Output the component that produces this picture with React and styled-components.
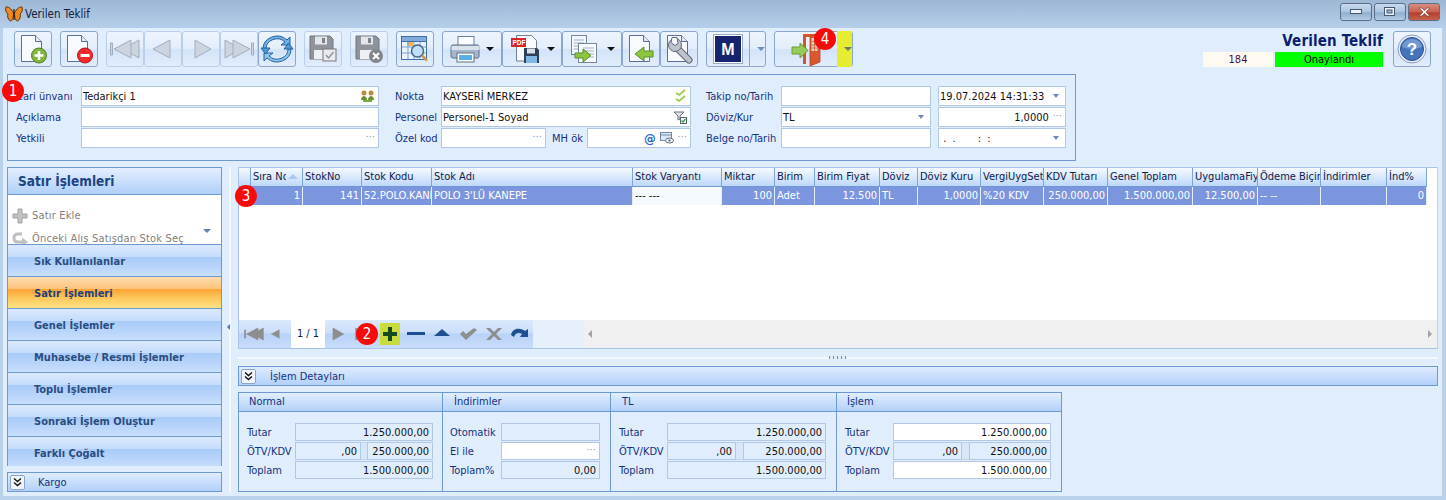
import React from "react";
import styled, { createGlobalStyle } from "styled-components";

const GlobalStyle = createGlobalStyle`
  html, body { margin: 0; padding: 0; background: #bad1ea; }
  body { font-family: "DejaVu Sans Condensed", "DejaVu Sans", "Liberation Sans", sans-serif; font-size: 11px; color: #000; }
  * { box-sizing: border-box; }
`;

const Page = styled.div`
  width: 1446px;
  height: 500px;
  overflow: hidden;
  position: relative;
  background: #bad1ea;
  display: flex;
  flex-direction: column;
`;

const TitleBar = styled.div`
  height: 28px;
  flex: none;
  display: flex;
  align-items: center;
  padding: 0 6px 0 5px;
  background: linear-gradient(#9db7d5, #b5cee9);
  font-size: 11.5px;
  color: #10203c;
`;
const TitleText = styled.span`
  margin-left: 2px;
  flex: 1;
`;
const WinButton = styled.div`
  width: 32px;
  height: 18px;
  margin-left: 2px;
  margin-top: -4px;
  border: 1px solid #5d6f88;
  border-radius: 3px;
  background: ${(p) =>
    p.$close
      ? "linear-gradient(#d88d80 0%, #c9604e 50%, #b3402d 55%, #c4604c 100%)"
      : "linear-gradient(#c9dcef 0%, #a9c3dd 50%, #8fadcd 55%, #b4cce4 100%)"};
  display: flex;
  align-items: center;
  justify-content: center;
`;

const Body = styled.div`
  height: 468px;
  margin: 0 4px 0 3px;
  flex: none;
  background: #e0edfd;
  display: flex;
  flex-direction: column;
`;

const Toolbar = styled.div`
  display: flex;
  height: 36px;
  margin-top: 3px;
  padding: 0 11px;
  flex: none;
`;
const ToolGroup = styled.div`
  display: flex;
  margin-left: ${(p) => p.$gap || 0}px;
`;
const ToolButton = styled.div`
  width: ${(p) => p.$w || 38}px;
  height: 36px;
  border: 1px solid ${(p) => (p.$off ? "#bccfe8" : "#8aa6cc")};
  border-radius: 3px;
  background: linear-gradient(#edf4fe 0%, #e3eefc 48%, #d3e3f9 52%, #e2edfc 100%);
  display: flex;
  align-items: center;
  justify-content: center;
  position: relative;
  flex: none;
`;
const Caret = styled.span`
  width: 0;
  height: 0;
  margin-left: ${(p) => p.$ml || 6}px;
  border-left: 4px solid transparent;
  border-right: 4px solid transparent;
  border-top: 4px solid ${(p) => p.$color || "#111"};
`;
const SplitPart = styled.div`
  width: ${(p) => p.$w}px;
  height: ${(p) => p.$h || 34}px;
  display: flex;
  align-items: center;
  justify-content: center;
  background: ${(p) => p.$bg || "transparent"};
  border-left: ${(p) => (p.$line ? "1px solid #8aa6cc" : "none")};
  flex: none;
`;
const Heading = styled.div`
  margin-left: auto;
  width: 180px;
  text-align: right;
  display: flex;
  flex-direction: column;
  align-items: flex-end;
`;
const HeadingTitle = styled.div`
  font-size: 15px;
  font-weight: bold;
  line-height: 20px;
  letter-spacing: 0.15px;
  color: #0a1f70;
`;
const StatusRow = styled.div`
  display: flex;
  gap: 2px;
  height: 15px;
  margin-top: 1px;
`;
const StatusBox = styled.div`
  width: ${(p) => p.$w}px;
  background: ${(p) => p.$bg};
  color: ${(p) => p.$fg || "#000"};
  text-align: center;
  line-height: 16px;
`;

const FormGroup = styled.div`
  width: 1069px;
  height: 87px;
  margin: 7px 0 0 4px;
  border: 1px solid #6d99d0;
  padding: 11px 0 0 8px;
  display: flex;
  flex: none;
`;
const FormCol = styled.div`
  width: ${(p) => p.$w}px;
  margin-left: ${(p) => p.$ml || 0}px;
  display: flex;
  flex-direction: column;
  gap: 1px;
`;
const FormRow = styled.div`
  display: flex;
  height: 20px;
  align-items: center;
`;
const Label = styled.span`
  width: ${(p) => p.$w}px;
  padding-left: ${(p) => p.$pl || 0}px;
  flex: none;
  color: #14327f;
  white-space: nowrap;
`;
const Field = styled.div`
  width: ${(p) => p.$w}px;
  height: ${(p) => p.$h || 20}px;
  margin-left: ${(p) => p.$ml || 0}px;
  flex: none;
  border: 1px solid #b1c7e5;
  background: ${(p) => (p.$ro ? "#e0edfd" : "#fff")};
  display: flex;
  align-items: center;
  justify-content: ${(p) => (p.$right ? "flex-end" : "flex-start")};
  padding: 0 3px 0 1px;
  gap: 4px;
  white-space: nowrap;
  overflow: hidden;
  color: #111;
`;
const SpinGap = styled.span`
  width: ${(p) => p.$w}px;
  height: 18px;
  flex: none;
  border: 1px solid #c3d5ec;
  border-left: none;
  border-right: none;
  background: #d8e6f9;
`;
const Grow = styled.span`
  flex: 1;
  text-align: ${(p) => p.$align || "left"};
`;
const Dots = styled.span`
  color: #5b7fb5;
  font-size: 9px;
  letter-spacing: 0.5px;
  margin-bottom: 2px;
`;
const DropTri = styled.span`
  width: 0;
  height: 0;
  margin-right: 3px;
  border-left: 3.5px solid transparent;
  border-right: 3.5px solid transparent;
  border-top: 4px solid #6c8ab8;
`;

const Main = styled.div`
  display: flex;
  margin-top: 6px;
  height: 325px;
  flex: none;
`;
const LeftCol = styled.div`
  width: 215px;
  margin-left: 4px;
  flex: none;
  display: flex;
  flex-direction: column;
`;
const NavPanel = styled.div`
  height: 299px;
  border: 1px solid #6d99d0;
  border-bottom: none;
  display: flex;
  flex-direction: column;
  overflow: hidden;
`;
const NavHeader = styled.div`
  height: 27px;
  flex: none;
  padding-left: 10px;
  line-height: 26px;
  font-size: 13.5px;
  font-weight: bold;
  color: #1b4486;
  border-bottom: 1px solid #6d99d0;
  background: linear-gradient(#e4effe, #afcff9);
`;
const NavWhite = styled.div`
  height: 49px;
  flex: none;
  background: #fff;
  position: relative;
  padding: 9px 0 0 4px;
  overflow: hidden;
  color: #808080;
  letter-spacing: 0.18px;
`;
const NavItem = styled.div`
  display: flex;
  align-items: center;
  gap: 4px;
  height: 23px;
`;
const NavMore = styled.span`
  position: absolute;
  right: 10px;
  top: 34px;
  width: 0;
  height: 0;
  border-left: 4px solid transparent;
  border-right: 4px solid transparent;
  border-top: 4px solid #5f82bd;
`;
const NavSection = styled.div`
  height: 32px;
  flex: none;
  border-top: 1px solid #6d99d0;
  padding-left: 26px;
  line-height: 34px;
  font-weight: bold;
  font-size: 11px;
  color: ${(p) => (p.$active ? "#20417a" : "#2a4d80")};
  background: ${(p) =>
    p.$active
      ? "linear-gradient(#fedcae 0%, #fdc37c 38%, #fca434 40%, #fdc95f 70%, #fde384 100%)"
      : "linear-gradient(#dbe9fd 0%, #c5dcfb 38%, #a9cbf9 40%, #b8d4fb 70%, #c8dffd 100%)"};
`;
const CollapseBar = styled.div`
  height: ${(p) => p.$h}px;
  margin-top: ${(p) => p.$mt || 0}px;
  flex: none;
  border: 1px solid #6d99d0;
  display: flex;
  align-items: center;
  padding-left: 2px;
  color: #14327f;
  background: linear-gradient(#dfebfe, #b3d1fa);
`;
const CollapseBtn = styled.span`
  width: 15px;
  height: 15px;
  flex: none;
  border: 1px solid #8aa6cc;
  border-radius: 2px;
  background: #f1f6fe;
  display: flex;
  align-items: center;
  justify-content: center;
  margin-right: ${(p) => p.$mr}px;
`;

const Splitter = styled.div`
  width: 16px;
  flex: none;
  display: flex;
  align-items: center;
  justify-content: center;
  position: relative;
`;
const SplitLine = styled.span`
  width: 2px;
  height: 100%;
  background: #f3f8ff;
  margin-left: -1px;
`;
const SplitArrow = styled.span`
  position: absolute;
  left: 5px;
  top: 157px;
  width: 0;
  height: 0;
  border-top: 3px solid transparent;
  border-bottom: 3px solid transparent;
  border-right: 3px solid #4f78b3;
`;

const RightCol = styled.div`
  width: 1200px;
  flex: none;
  display: flex;
  flex-direction: column;
`;
const GridBox = styled.div`
  height: 182px;
  flex: none;
  border: 1px solid #a9c4e8;
  border-right-color: #bcd2ee;
  background: #fff;
  display: flex;
  flex-direction: column;
`;
const GridHead = styled.div`
  display: flex;
  height: 19px;
  flex: none;
`;
const HeadCell = styled.div`
  width: ${(p) => p.$w}px;
  flex: none;
  position: relative;
  padding-left: 2px;
  line-height: 18px;
  white-space: nowrap;
  overflow: hidden;
  border-right: 1px solid #7ea4d8;
  border-bottom: 1px solid #6d99d0;
  background: linear-gradient(#f6faff, #bdd7fb);
  color: #10204a;
`;
const SortMark = styled.span`
  position: absolute;
  right: 4px;
  top: 6px;
  width: 0;
  height: 0;
  border-left: 5px solid transparent;
  border-right: 5px solid transparent;
  border-bottom: 5px solid #a7c8f2;
`;
const ClipText = styled.span`
  display: block;
  width: ${(p) => p.$w}px;
  overflow: hidden;
`;
const GridRow = styled.div`
  display: flex;
  height: 18px;
  flex: none;
`;
const Cell = styled.div`
  width: ${(p) => p.$w}px;
  flex: none;
  padding: 0 2px;
  line-height: 17px;
  white-space: nowrap;
  overflow: hidden;
  text-align: ${(p) => p.$align || "left"};
  border-right: 1px solid #e4edfb;
  background: ${(p) => (p.$focus ? "#f5faff" : "#7b96de")};
  color: ${(p) => (p.$focus ? "#111" : "#fff")};
`;
const GridSpace = styled.div`
  flex: 1;
`;
const GridFoot = styled.div`
  height: 28px;
  flex: none;
  display: flex;
`;
const Pager = styled.div`
  width: 294px;
  flex: none;
  display: flex;
  align-items: center;
  position: relative;
  background: linear-gradient(#dbe8fc 0%, #cbdefa 45%, #b8d2f8 50%, #c8dcfa 100%);
`;
const PagerIcon = styled.span`
  width: ${(p) => p.$w}px;
  margin-left: ${(p) => p.$ml || 0}px;
  height: 28px;
  flex: none;
  display: flex;
  align-items: center;
  justify-content: center;
`;
const PagerAdd = styled.span`
  width: 20px;
  height: 22px;
  flex: none;
  display: flex;
  align-items: center;
  justify-content: center;
  background: #c8dc3c;
`;
const PagerCount = styled.span`
  width: 34px;
  height: 28px;
  flex: none;
  background: #fff;
  text-align: center;
  line-height: 28px;
  color: #10204a;
`;
const FootGap = styled.div`
  width: 50px;
  flex: none;
  background: #e6f0fd;
`;
const HScroll = styled.div`
  flex: 1;
  display: flex;
  align-items: center;
  justify-content: space-between;
  padding: 0 5px;
  background: #f0f0f0;
`;
const ScrollTri = styled.span`
  width: 0;
  height: 0;
  border-top: 4px solid transparent;
  border-bottom: 4px solid transparent;
  border-${(p) => (p.$dir === "left" ? "right" : "left")}: 4px solid #a0a4ac;
`;
const HSplit = styled.div`
  height: 17px;
  flex: none;
  display: flex;
  align-items: center;
  justify-content: center;
  position: relative;
`;
const HSplitLine = styled.span`
  width: 100%;
  height: 2px;
  background: #f3f8ff;
`;
const Grip = styled.span`
  position: absolute;
  top: 7px;
  left: 50%;
  margin-left: -9px;
  width: 18px;
  height: 3px;
  background: repeating-linear-gradient(90deg, #6d8fc0 0 1px, #e0edfd 1px 4px);
`;
const Panels = styled.div`
  display: flex;
  height: 100px;
  margin-top: 6px;
  flex: none;
`;
const Panel = styled.div`
  width: ${(p) => p.$w}px;
  flex: none;
  border: 1px solid #6d99d0;
  margin-left: ${(p) => (p.$first ? 0 : -1)}px;
  display: flex;
  flex-direction: column;
`;
const PanelHead = styled.div`
  height: 19px;
  flex: none;
  padding-left: ${(p) => p.$pl || 10}px;
  line-height: 18px;
  color: #14327f;
  border-bottom: 1px solid #6d99d0;
  background: linear-gradient(#e2eefe, #b3d1fa);
`;
const PanelBody = styled.div`
  padding: 11px 0 0 ${(p) => p.$pl || 8}px;
  display: flex;
  flex-direction: column;
  gap: 1px;
`;
const PanelRow = styled.div`
  display: flex;
  align-items: center;
  height: 18px;
`;

const Badge = styled.span`
  position: absolute;
  left: ${(p) => p.$x - 11}px;
  top: ${(p) => p.$y - 11}px;
  width: 22px;
  height: 22px;
  border-radius: 50%;
  background: #f60a0a;
  color: #fff;
  font-size: 15px;
  line-height: 22px;
  text-align: center;
  z-index: 5;
`;

/* drawings */
const Butterfly = () => (
  <svg width="18" height="16" viewBox="0 0 18 16">
    <path d="M8.500 7C6 2 3 .5 1 1c-1 2 0 6 2 7-1 2 0 6 2.500 7 2 0 3-4 3-8z" fill="#f08a1d" stroke="#5a3410" strokeWidth="1" />
    <path d="M9.500 7C12 2 15 .5 17 1c1 2 0 6-2 7 1 2 0 6-2.500 7-2 0-3-4-3-8z" fill="#f08a1d" stroke="#5a3410" strokeWidth="1" />
    <rect x="8.400" y="3" width="1.200" height="11" fill="#2a1a08" />
  </svg>
);
const Doc = ({ children }) => (
  <svg width="28" height="30" viewBox="0 0 28 30">
    <path d="M2.500 1.500h14l6 6v20h-20z" fill="#f8faff" stroke="#5d6f97" />
    <path d="M16.500 1.500v6h6" fill="#dfe7f4" stroke="#5d6f97" />
    {children}
  </svg>
);
const DocAdd = () => (
  <Doc>
    <circle cx="20" cy="21.500" r="7.500" fill="#7fb73b" stroke="#4c7f1e" />
    <path d="M20 17v9M15.500 21.500h9" stroke="#fff" strokeWidth="2.500" />
  </Doc>
);
const DocRemove = () => (
  <Doc>
    <circle cx="20" cy="21.500" r="7.500" fill="#ef2b2b" stroke="#b01616" />
    <path d="M15.500 21.500h9" stroke="#fff" strokeWidth="3" />
  </Doc>
);
const NavArrows = ({ kind, color = "#ccd4df", edge = "#a3aebd", w = 30, h = 20 }) => {
  const tri = {
    first: ["M.5 4v12h2V4z", "M29 1L13 10l16 9z", "M21 1L4 10l17 9z"],
    prev: ["M22 1L5 10l17 9z"],
    next: ["M9 1l16 9-16 9z"],
    last: ["M29.500 4v12h-2V4z", "M1 1l16 9-16 9z", "M9 1l17 9-17 9z"],
  }[kind];
  return (
    <svg width={w} height={h} viewBox="0 0 30 20">
      {tri.map((d) => (
        <path key={d} d={d} fill={color} stroke={edge} strokeWidth="1" />
      ))}
    </svg>
  );
};
const Refresh = () => (
  <svg width="34" height="30" viewBox="0 0 34 30">
    <path d="M6 15a11 10 0 0 1 19-7l-4 3h9v-8l-3 3a14 13 0 0 0-24 9z" fill="#6fb0e8" stroke="#27639f" />
    <path d="M28 15a11 10 0 0 1-19 7l4-3H4v8l3-3a14 13 0 0 0 24-9z" fill="#8cc3ef" stroke="#27639f" />
    <path d="M1 14h9l-4.500 6zM24 15h9l-4.500-6z" fill="#4e98d8" stroke="#27639f" />
  </svg>
);
const Floppy = ({ children, color = "#8f949c" }) => (
  <svg width="30" height="30" viewBox="0 0 30 30">
    <path d="M2 2h20l3 3v20H2z" fill={color} stroke="#70757c" />
    <rect x="7" y="2.500" width="12" height="8" fill="#e4e6ea" />
    <rect x="14" y="4" width="3" height="5" fill="#7d828a" />
    <rect x="6" y="16" width="15" height="9" fill="#eef0f3" />
    {children}
  </svg>
);
const TableSearch = () => (
  <svg width="30" height="30" viewBox="0 0 30 30">
    <rect x="1.500" y="2.500" width="25" height="23" fill="#eaf2fc" stroke="#3f6fb0" />
    <rect x="1.500" y="2.500" width="25" height="5" fill="#82abdc" stroke="#3f6fb0" />
    <rect x="7" y="8" width="6" height="4" fill="#f3b24a" />
    <path d="M8 8v17M14 8v17M20 8v17M2 13h24M2 19h24" stroke="#78a3d5" />
    <circle cx="17.500" cy="17" r="6" fill="#bfe0f8" stroke="#44658f" strokeWidth="1.500" />
    <path d="M22 21.500l5 5" stroke="#c69a4e" strokeWidth="2.500" />
  </svg>
);
const Printer = () => (
  <svg width="30" height="28" viewBox="0 0 30 28">
    <rect x="8" y="1.500" width="16" height="9" fill="#fbfcff" stroke="#6f7f95" />
    <path d="M3 10h25a2 2 0 0 1 1 2v9a2 2 0 0 1-1 2H3a2 2 0 0 1-2-2v-9a2 2 0 0 1 2-2z" fill="#a8b8cc" stroke="#5d6e87" />
    <rect x="1.500" y="11" width="28" height="4" fill="#d8e1ec" />
    <rect x="7" y="18" width="17" height="9" fill="#fff" stroke="#5d6e87" />
    <rect x="9" y="20" width="13" height="5" fill="#58b0e8" />
  </svg>
);
const PdfSave = () => (
  <svg width="30" height="30" viewBox="0 0 30 30">
    <path d="M6.500 1.500h15l5 5V27h-20z" fill="#f8faff" stroke="#6f7f95" />
    <rect x="1" y="4" width="15" height="9" fill="#d8272b" />
    <text x="2.500" y="11" fontSize="6.500" fontWeight="bold" fill="#fff" fontFamily="Liberation Sans">PDF</text>
    <path d="M14 14h13l2 2v13H14z" fill="#2f3f55" />
    <rect x="17" y="14.500" width="8" height="5" fill="#d8dfe8" />
    <rect x="16" y="22" width="11" height="7" fill="#7fb8e8" />
  </svg>
);
const DocsArrow = () => (
  <svg width="28" height="30" viewBox="0 0 28 30">
    <rect x="1.500" y="1.500" width="15" height="19" fill="#f3f7fd" stroke="#7387a5" />
    <path d="M4 6h10M4 9h10M4 12h10M4 15h6" stroke="#9db0cb" />
    <rect x="8.500" y="9.500" width="18" height="19" fill="#fafcff" stroke="#7387a5" />
    <path d="M13 14h11M13 17h11M13 20h11M18 23h6" stroke="#9db0cb" />
    <path d="M5 19h8v-4l8 6.500-8 6.500v-4H5z" fill="#8cc63f" stroke="#5b8e22" />
  </svg>
);
const DocArrowLeft = () => (
  <Doc>
    <path d="M26 17h-9v-4l-9 7 9 7v-4h9z" fill="#8cc63f" stroke="#5b8e22" />
  </Doc>
);
const DocWrench = () => (
  <Doc>
    <path d="M10 12l14 14" stroke="#5f6875" strokeWidth="7" strokeLinecap="round" />
    <path d="M10 12l14 14" stroke="#bcc3cd" strokeWidth="5" strokeLinecap="round" />
    <circle cx="10" cy="11" r="6.500" fill="#bcc3cd" stroke="#5f6875" />
    <path d="M7 3.500h5l1 6-3 2-4-3z" fill="#f8faff" stroke="#5f6875" />
  </Doc>
);
const ExitDoor = () => (
  <svg width="58" height="34" viewBox="0 0 58 34">
    <path d="M26 2h17v3H29v27h-3z" fill="#d4552e" />
    <path d="M33 4l10-3v29l-10 4z" fill="#d9582f" stroke="#b5431f" strokeWidth=".8" />
    <rect x="34.500" y="6" width="6" height="13" fill="#d4d8c0" />
    <path d="M34.500 9.500h6M34.500 13h6M34.500 16h6M37.500 6v13" stroke="#d9582f" strokeWidth=".8" />
    <path d="M15 15h8v-4l8 7.500-8 7.500v-4h-8z" fill="#96cc5a" stroke="#6d9a38" />
  </svg>
);
const Help = () => (
  <svg width="30" height="30" viewBox="0 0 30 30">
    <circle cx="15" cy="15" r="14" fill="#e8eef8" stroke="#8d9cc0" />
    <circle cx="15" cy="15" r="11.500" fill="#4673bd" stroke="#2e4f96" />
    <path d="M5 13a10 8 0 0 1 20 0 16 8 0 0 1-20 0z" fill="#8fb0e0" opacity=".6" />
    <text x="15" y="21" textAnchor="middle" fontSize="17" fontWeight="bold" fill="#fff" fontFamily="Liberation Sans">?</text>
  </svg>
);
const People = () => (
  <svg width="15" height="14" viewBox="0 0 15 14">
    <circle cx="4" cy="4" r="2.500" fill="#b98a3a" />
    <circle cx="11" cy="4" r="2.500" fill="#b98a3a" />
    <path d="M1 11c0-3 2-4 3-4s3 1 3 4zM8 11c0-3 2-4 3-4s3 1 3 4z" fill="#6a8f2f" />
    <rect x="3" y="11" width="9" height="2" fill="#6fb03a" />
  </svg>
);
const DoubleCheck = () => (
  <svg width="12" height="14" viewBox="0 0 12 14">
    <path d="M1 4l3 2 6-5M1 10l3 2 6-5" fill="none" stroke="#9ccb4a" strokeWidth="1.700" />
  </svg>
);
const PersonFilter = () => (
  <svg width="14" height="14" viewBox="0 0 14 14">
    <path d="M1 2h10L7 6v3l-2 1V6z" fill="#dfe3e8" stroke="#6b727c" />
    <rect x="7.500" y="7.500" width="6" height="6" fill="#fff" stroke="#59636f" />
    <path d="M8.500 10.500l1.500 1.500 2.500-3" fill="none" stroke="#3aa03a" strokeWidth="1.300" />
  </svg>
);
const AtSign = styled.span`
  color: #2a63d8;
  font-size: 13px;
  font-weight: bold;
`;
const Viewer = () => (
  <svg width="14" height="12" viewBox="0 0 14 12">
    <rect x=".5" y=".5" width="11" height="8" fill="#dfe9f6" stroke="#6f87a8" />
    <path d="M.5 3h11" stroke="#6f87a8" />
    <ellipse cx="9.500" cy="8.500" rx="4" ry="2.500" fill="#eef3f9" stroke="#5c6f88" />
    <circle cx="9.500" cy="8.500" r="1" fill="#44566e" />
  </svg>
);
const MBlock = () => (
  <svg width="30" height="30" viewBox="0 0 30 30">
    <rect x=".5" y=".5" width="29" height="29" fill="#fff" stroke="#9aa8c0" />
    <rect x="2" y="2" width="26" height="26" fill="#16246e" />
    <text x="15" y="21" textAnchor="middle" fontSize="16" fontWeight="bold" fill="#fff" fontFamily="Liberation Sans">M</text>
  </svg>
);
const Chevrons = () => (
  <svg width="9" height="9" viewBox="0 0 9 9">
    <path d="M1 .5l3.500 3 3.500-3M1 4.500l3.500 3 3.500-3" fill="none" stroke="#111" strokeWidth="1.400" />
  </svg>
);
const GrayPlus = () => (
  <svg width="16" height="16" viewBox="0 0 16 16">
    <path d="M6 1h4v5h5v4h-5v5H6v-5H1V6h5z" fill="#c2c2c2" stroke="#a3a3a3" />
  </svg>
);
const GrayBack = () => (
  <svg width="16" height="14" viewBox="0 0 16 14">
    <path d="M10 2H6C3 2 2 4 2 6s1 4 4 4h5" fill="none" stroke="#c0c0c0" strokeWidth="3" />
    <path d="M10 5.500l6 4.500-6 4z" fill="#c0c0c0" />
  </svg>
);
const PagerGlyph = ({ d, color, w = 20, h = 18 }) => (
  <svg width={w} height={h} viewBox="0 0 20 18">
    <path d={d} fill={color} />
  </svg>
);

const WinIcon = ({ kind }) => {
  if (kind === "min") return <svg width="12" height="6" viewBox="0 0 12 6"><rect x=".5" y=".5" width="11" height="4" fill="#eef3f9" stroke="#46586f" /></svg>;
  if (kind === "max") return <svg width="12" height="10" viewBox="0 0 12 10"><rect x=".5" y=".5" width="10" height="8" fill="#eef3f9" stroke="#46586f" /><rect x="3" y="3" width="5" height="3" fill="#9db7d5" stroke="#46586f" /></svg>;
  return <svg width="13" height="10" viewBox="0 0 13 10"><path d="M1 1h3l2.500 2.500L9 1h3L8 5l4 4H9L6.500 6.500 4 9H1l4-4z" fill="#f6eeea" stroke="#7a3224" strokeWidth=".6" /></svg>;
};

const columns = [
  { w: 52, title: "Sıra No", clip: 33, sort: true, value: "1", align: "right" },
  { w: 59, title: "StokNo", value: "141", align: "right" },
  { w: 70, title: "Stok Kodu", value: "52.POLO.KANEPE" },
  { w: 201, title: "Stok Adı", value: "POLO 3'LÜ KANEPE" },
  { w: 89, title: "Stok Varyantı", value: "--- ---", focus: true },
  { w: 53, title: "Miktar", value: "100", align: "right" },
  { w: 40, title: "Birim", value: "Adet" },
  { w: 65, title: "Birim Fiyat", value: "12.500", align: "right" },
  { w: 38, title: "Döviz", value: "TL" },
  { w: 63, title: "Döviz Kuru", value: "1,0000", align: "right" },
  { w: 63, title: "VergiUygSet", value: "%20 KDV" },
  { w: 64, title: "KDV Tutarı", value: "250.000,00", align: "right" },
  { w: 85, title: "Genel Toplam", value: "1.500.000,00", align: "right" },
  { w: 65, title: "UygulamaFiyat", value: "12.500,00", align: "right" },
  { w: 63, title: "Ödeme Biçimi", value: "-- --" },
  { w: 66, title: "İndirimler", value: "" },
  { w: 40, title: "İnd%", value: "0", align: "right" },
];

const sections = [
  "Sık Kullanılanlar",
  "Satır İşlemleri",
  "Genel İşlemler",
  "Muhasebe / Resmi İşlemler",
  "Toplu İşlemler",
  "Sonraki İşlem Oluştur",
  "Farklı Çoğalt",
];

const TotalsPanel = ({ title, w, first, fullW, leftW, rightW, gapW, editable, pl }) => (
  <Panel $w={w} $first={first}>
    <PanelHead $pl={pl}>{title}</PanelHead>
    <PanelBody>
      <PanelRow>
        <Label $w={48}>Tutar</Label>
        <Field $w={fullW} $h={18} $right $ro={!editable}>1.250.000,00</Field>
      </PanelRow>
      <PanelRow>
        <Label $w={48}>ÖTV/KDV</Label>
        <Field $w={leftW} $h={18} $right $ro>,00</Field>
        <SpinGap $w={gapW} />
        <Field $w={rightW} $h={18} $right $ro>250.000,00</Field>
      </PanelRow>
      <PanelRow>
        <Label $w={48}>Toplam</Label>
        <Field $w={fullW} $h={18} $right $ro={!editable}>1.500.000,00</Field>
      </PanelRow>
    </PanelBody>
  </Panel>
);

const App = () => {
  return (
    <Page>
      <GlobalStyle />
      <TitleBar>
        <Butterfly />
        <TitleText>Verilen Teklif</TitleText>
        <WinButton><WinIcon kind="min" /></WinButton>
        <WinButton><WinIcon kind="max" /></WinButton>
        <WinButton $close><WinIcon kind="close" /></WinButton>
      </TitleBar>
      <Body>
        <Toolbar>
          <ToolButton><DocAdd /></ToolButton>
          <ToolGroup $gap={8}><ToolButton><DocRemove /></ToolButton></ToolGroup>
          <ToolGroup $gap={8}>
            <ToolButton $off><NavArrows kind="first" /></ToolButton>
            <ToolButton $off><NavArrows kind="prev" /></ToolButton>
            <ToolButton $off><NavArrows kind="next" /></ToolButton>
            <ToolButton $off><NavArrows kind="last" /></ToolButton>
            <ToolButton><Refresh /></ToolButton>
          </ToolGroup>
          <ToolGroup $gap={8}>
            <ToolButton $off>
              <Floppy>
                <rect x="15" y="15" width="13" height="12" fill="#e8eaee" stroke="#777" />
                <path d="M18 21l2.500 3 5-6" fill="none" stroke="#8a8f96" strokeWidth="1.300" />
              </Floppy>
            </ToolButton>
          </ToolGroup>
          <ToolGroup $gap={8}>
            <ToolButton $off>
              <Floppy>
                <circle cx="22" cy="22" r="7" fill="#80858c" />
                <path d="M19 19l6 6M25 19l-6 6" stroke="#fff" strokeWidth="2" />
              </Floppy>
            </ToolButton>
          </ToolGroup>
          <ToolGroup $gap={8}><ToolButton><TableSearch /></ToolButton></ToolGroup>
          <ToolGroup $gap={8}>
            <ToolButton $w={60}><Printer /><Caret /></ToolButton>
            <ToolButton $w={60}><PdfSave /><Caret $ml={7} /></ToolButton>
            <ToolButton $w={60}><DocsArrow /><Caret $ml={9} /></ToolButton>
            <ToolButton><DocArrowLeft /></ToolButton>
            <ToolButton><DocWrench /></ToolButton>
          </ToolGroup>
          <ToolGroup $gap={8}>
            <ToolButton $w={60}>
              <SplitPart $w={42}><MBlock /></SplitPart>
              <SplitPart $w={16} $line><Caret $ml={0} $color="#6d8dbf" /></SplitPart>
            </ToolButton>
          </ToolGroup>
          <ToolGroup $gap={8}>
            <ToolButton $w={79}>
              <SplitPart $w={62}><ExitDoor /></SplitPart>
              <SplitPart $w={15} $h={36} $bg="#e6ec30"><Caret $ml={0} $color="#6a7a6a" /></SplitPart>
            </ToolButton>
          </ToolGroup>
          <Heading>
            <HeadingTitle>Verilen Teklif</HeadingTitle>
            <StatusRow>
              <StatusBox $w={70} $bg="#fffaf0" $fg="#4a0a5a">184</StatusBox>
              <StatusBox $w={108} $bg="#00ff00">Onaylandı</StatusBox>
            </StatusRow>
          </Heading>
          <ToolGroup $gap={10}><ToolButton><Help /></ToolButton></ToolGroup>
        </Toolbar>

        <FormGroup>
          <FormCol $w={363}>
            <FormRow><Label $w={65}>Cari ünvanı</Label><Field $w={298}><Grow>Tedarikçi 1</Grow><People /></Field></FormRow>
            <FormRow><Label $w={65}>Açıklama</Label><Field $w={298} /></FormRow>
            <FormRow><Label $w={65}>Yetkili</Label><Field $w={298}><Grow /><Dots>···</Dots></Field></FormRow>
          </FormCol>
          <FormCol $w={296} $ml={16}>
            <FormRow><Label $w={46}>Nokta</Label><Field $w={250}><Grow>KAYSERİ MERKEZ</Grow><DoubleCheck /></Field></FormRow>
            <FormRow><Label $w={46}>Personel</Label><Field $w={250}><Grow>Personel-1 Soyad</Grow><PersonFilter /></Field></FormRow>
            <FormRow>
              <Label $w={46}>Özel kod</Label>
              <Field $w={105}><Grow /><Dots>···</Dots></Field>
              <Label $w={41} $pl={6}>MH ök</Label>
              <Field $w={104}><Grow /><AtSign>@</AtSign><Viewer /><Dots>···</Dots></Field>
            </FormRow>
          </FormCol>
          <FormCol $w={360} $ml={15}>
            <FormRow>
              <Label $w={75}>Takip no/Tarih</Label>
              <Field $w={150} />
              <Field $w={128} $ml={7}><Grow>19.07.2024 14:31:33</Grow><DropTri /></Field>
            </FormRow>
            <FormRow>
              <Label $w={75}>Döviz/Kur</Label>
              <Field $w={150}><Grow>TL</Grow><DropTri /></Field>
              <Field $w={128} $ml={7}><Grow $align="right">1,0000</Grow><Dots>···</Dots></Field>
            </FormRow>
            <FormRow>
              <Label $w={75}>Belge no/Tarih</Label>
              <Field $w={150} />
              <Field $w={128} $ml={7}><Grow>&nbsp;.&nbsp;&nbsp;.&nbsp;&nbsp;&nbsp;&nbsp;&nbsp;&nbsp;&nbsp;:&nbsp;&nbsp;:</Grow><DropTri /></Field>
            </FormRow>
          </FormCol>
        </FormGroup>

        <Main>
          <LeftCol>
            <NavPanel>
              <NavHeader>Satır İşlemleri</NavHeader>
              <NavWhite>
                <NavItem><GrayPlus />Satır Ekle</NavItem>
                <NavItem><GrayBack />Önceki Alış Satışdan Stok Seç</NavItem>
                <NavMore />
              </NavWhite>
              {sections.map((name) => (
                <NavSection key={name} $active={name === "Satır İşlemleri"}>{name}</NavSection>
              ))}
            </NavPanel>
            <CollapseBar $h={20} $mt={6}>
              <CollapseBtn $mr={13}><Chevrons /></CollapseBtn>
              Kargo
            </CollapseBar>
          </LeftCol>
          <Splitter>
            <SplitLine />
            <SplitArrow />
          </Splitter>
          <RightCol>
            <GridBox>
              <GridHead>
                <HeadCell $w={12} />
                {columns.map((c) => (
                  <HeadCell key={c.title} $w={c.w}>
                    {c.clip ? <ClipText $w={c.clip}>{c.title}</ClipText> : c.title}
                    {c.sort && <SortMark />}
                  </HeadCell>
                ))}
              </GridHead>
              <GridRow>
                <Cell $w={12} />
                {columns.map((c) => (
                  <Cell key={c.title} $w={c.w} $align={c.align} $focus={c.focus}>{c.value}</Cell>
                ))}
              </GridRow>
              <GridSpace />
              <GridFoot>
                <Pager>
                  <PagerIcon $w={30}><NavArrows kind="first" color="#8e8e8e" edge="#8e8e8e" w={20} h={14} /></PagerIcon>
                  <PagerIcon $w={14}><NavArrows kind="prev" color="#8e8e8e" edge="#8e8e8e" w={20} h={14} /></PagerIcon>
                  <PagerIcon $w={8} />
                  <PagerCount>1 / 1</PagerCount>
                  <PagerIcon $w={24}><NavArrows kind="next" color="#8e8e8e" edge="#8e8e8e" w={20} h={14} /></PagerIcon>
                  <PagerIcon $w={31}><NavArrows kind="last" color="#8e8e8e" edge="#8e8e8e" w={20} h={14} /></PagerIcon>
                  <PagerAdd><PagerGlyph color="#174a1c" d="M8 2h4v5h5v4h-5v5H8v-5H3V7h5z" /></PagerAdd>
                  <PagerIcon $w={26} $ml={3}><PagerGlyph color="#1d4f92" d="M1 7h18v3H1z" /></PagerIcon>
                  <PagerIcon $w={26}><PagerGlyph color="#1d4f92" d="M10 4l8 7H2z" /></PagerIcon>
                  <PagerIcon $w={26}><PagerGlyph color="#8e8e8e" d="M2 9l3-3 3 3 8-6 3 2-11 10z" /></PagerIcon>
                  <PagerIcon $w={26}><PagerGlyph color="#8e8e8e" d="M2 3h4l4 4 4-4h4l-6 6 6 6h-4l-4-4-4 4H2l6-6z" /></PagerIcon>
                  <PagerIcon $w={26}><PagerGlyph color="#1d4f92" d="M1 10c1-5 5-7 9-6 2 0 4 1 5 2l3-2v8h-8l2-3c-3-2-7-1-8 3z" /></PagerIcon>
                </Pager>
                <FootGap />
                <HScroll>
                  <ScrollTri $dir="left" />
                  <ScrollTri $dir="right" />
                </HScroll>
              </GridFoot>
            </GridBox>
            <HSplit>
              <HSplitLine />
              <Grip />
            </HSplit>
            <CollapseBar $h={20}>
              <CollapseBtn $mr={14}><Chevrons /></CollapseBtn>
              İşlem Detayları
            </CollapseBar>
            <Panels>
              <TotalsPanel first title="Normal" w={205} fullW={138} leftW={66} rightW={66} gapW={6} />
              <Panel $w={169}>
                <PanelHead $pl={11}>İndirimler</PanelHead>
                <PanelBody $pl={7}>
                  <PanelRow><Label $w={51}>Otomatik</Label><Field $w={99} $h={18} $ro /></PanelRow>
                  <PanelRow><Label $w={51}>El ile</Label><Field $w={99} $h={18}><Grow /><Dots>···</Dots></Field></PanelRow>
                  <PanelRow><Label $w={51}>Toplam%</Label><Field $w={99} $h={18} $right $ro>0,00</Field></PanelRow>
                </PanelBody>
              </Panel>
              <TotalsPanel title="TL" w={227} pl={11} fullW={159} leftW={69} rightW={83} gapW={7} />
              <TotalsPanel title="İşlem" w={226} fullW={158} leftW={69} rightW={82} gapW={7} editable />
            </Panels>
          </RightCol>
        </Main>
      </Body>
      <Badge $x={13} $y={91}>1</Badge>
      <Badge $x={367} $y={334}>2</Badge>
      <Badge $x={246} $y={196}>3</Badge>
      <Badge $x={825} $y={39}>4</Badge>
    </Page>
  );
};

export default App;
